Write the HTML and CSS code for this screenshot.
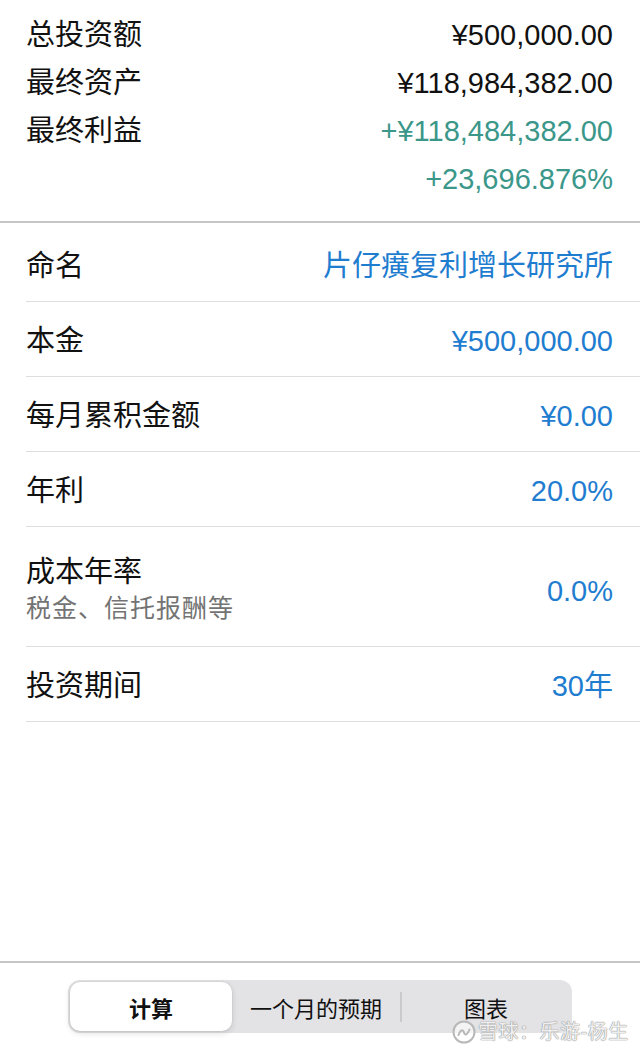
FILE: index.html
```html
<!DOCTYPE html>
<html lang="zh-CN">
<head>
<meta charset="utf-8">
<title>复利计算</title>
<link rel="stylesheet" href="styles.css">
</head>
<body>
<div class="page">
  <section class="summary">
    <div class="srow"><span class="label">总投资额</span><span class="val">¥500,000.00</span></div>
    <div class="srow"><span class="label">最终资产</span><span class="val">¥118,984,382.00</span></div>
    <div class="srow"><span class="label">最终利益</span><span class="val green">+¥118,484,382.00</span></div>
    <div class="srow"><span class="label"></span><span class="val green">+23,696.876%</span></div>
  </section>

  <ul class="list">
    <li class="row"><span class="label">命名</span><span class="val blue">片仔癀复利增长研究所</span></li>
    <li class="row"><span class="label">本金</span><span class="val blue">¥500,000.00</span></li>
    <li class="row"><span class="label">每月累积金额</span><span class="val blue">¥0.00</span></li>
    <li class="row"><span class="label">年利</span><span class="val blue">20.0%</span></li>
    <li class="row tall">
      <span class="labels"><span class="label">成本年率</span><span class="sub">税金、信托报酬等</span></span>
      <span class="val blue">0.0%</span>
    </li>
    <li class="row"><span class="label">投资期间</span><span class="val blue">30年</span></li>
  </ul>

  <div class="spacer"></div>

  <footer class="toolbar">
    <div class="seg">
      <div class="seg-item active">计算</div>
      <div class="seg-item">一个月的预期</div>
      <div class="seg-div"></div>
      <div class="seg-item">图表</div>
    </div>
  </footer>

  <div class="watermark">
    <svg class="wm-logo" viewBox="0 0 24 24" width="24" height="24">
      <circle cx="12" cy="12" r="10.5" fill="rgba(255,255,255,0.6)" stroke="#b8b8b8" stroke-width="2"/>
      <path d="M6.5 15 C8.5 9.5, 11 9, 12 12.5 C13 16, 15.5 15, 17.5 9.5" fill="none" stroke="#b8b8b8" stroke-width="2" stroke-linecap="round"/>
    </svg>
    <span class="wm-text">雪球：乐游-杨生</span>
  </div>
</div>
</body>
</html>
```

FILE: styles.css
```css
* { box-sizing: border-box; }

html, body {
  margin: 0;
  padding: 0;
  background: #ffffff;
}

body {
  font-family: "Liberation Sans", "Noto Sans CJK SC", sans-serif;
  color: #111111;
}

.page {
  position: relative;
  width: 640px;
  height: 1051px;
  display: flex;
  flex-direction: column;
  overflow: hidden;
}

/* summary */
.summary {
  padding: 11px 27px 18px 26px;
  border-bottom: 2px solid #c6c6c6;
  display: flex;
  flex-direction: column;
}

.srow {
  display: flex;
  justify-content: space-between;
  align-items: center;
  height: 48px;
  font-size: 29px;
  line-height: 48px;
}

.label {
  font-size: 29px;
  color: #111111;
}

.val {
  font-size: 29px;
  color: #111111;
  white-space: nowrap;
}

.green { color: #3a978a; }
.blue { color: #1f7dd0; }

/* list */
.list {
  list-style: none;
  margin: 0;
  padding: 4px 0 0 26px;
}

.row {
  display: flex;
  justify-content: space-between;
  align-items: center;
  height: 75px;
  padding-top: 4px;
  padding-right: 27px;
  border-bottom: 1.5px solid #dedede;
  line-height: 34px;
}

.row.tall {
  height: 120px;
  padding-top: 8px;
}

.labels {
  display: flex;
  flex-direction: column;
}

.sub {
  font-size: 25px;
  line-height: 38px;
  color: #737373;
  letter-spacing: 1px;
}

.spacer { flex: 1; }

/* toolbar */
.toolbar {
  height: 90px;
  border-top: 2px solid #c6c6c6;
  padding: 17px 0 0 68px;
  display: flex;
  align-items: flex-start;
}

.seg {
  width: 504px;
  height: 53px;
  background: #e3e3e6;
  border-radius: 12px;
  padding: 2px;
  display: flex;
  align-items: center;
}

.seg-item {
  flex: 1;
  height: 49px;
  display: flex;
  align-items: center;
  justify-content: center;
  font-size: 22px;
  color: #111111;
  border-radius: 10px;
}

.seg-item.active {
  flex: 0 0 162px;
  background: #ffffff;
  font-weight: bold;
  box-shadow: 0 2px 6px rgba(0, 0, 0, 0.14), 0 0 0 0.5px rgba(0, 0, 0, 0.06);
}

.seg-div {
  width: 2px;
  height: 30px;
  background: #cacacc;
}

/* watermark overlay */
.watermark {
  position: absolute;
  left: 452px;
  top: 1018px;
  display: flex;
  align-items: center;
  gap: 2px;
  white-space: nowrap;
}

.wm-text {
  font-size: 20px;
  line-height: 28px;
  color: rgba(255, 255, 255, 0.85);
  text-shadow: 0 0 1px #9d9d9d, 0 0 1px #9d9d9d, 0 0 1px #9d9d9d;
  letter-spacing: 0.5px;
}
```
